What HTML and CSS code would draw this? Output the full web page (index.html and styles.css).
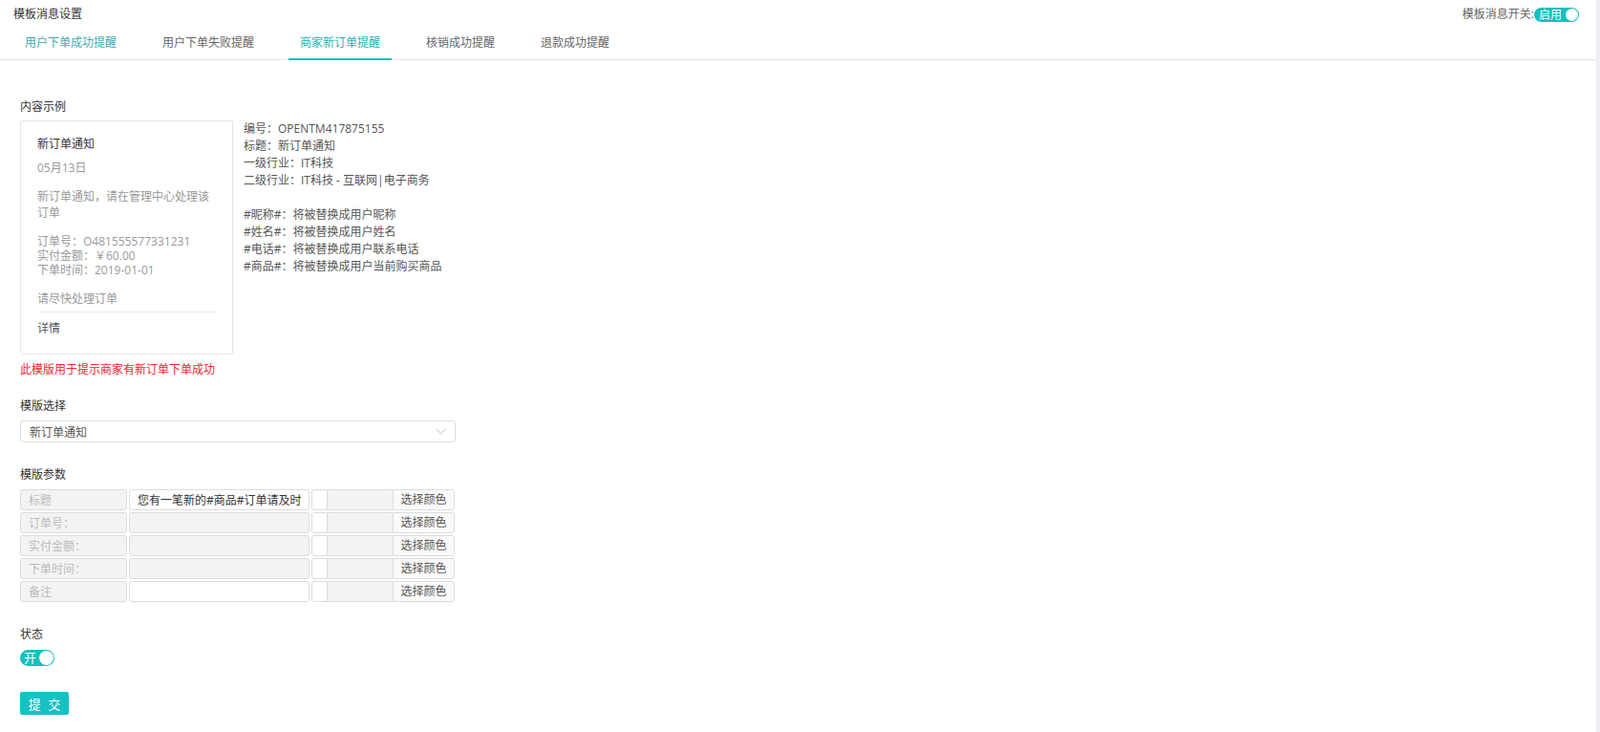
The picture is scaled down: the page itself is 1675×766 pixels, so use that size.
FILE: index.html
```html
<!DOCTYPE html>
<html lang="zh-CN">
<head>
<meta charset="UTF-8">
<meta name="viewport" content="width=device-width, initial-scale=1.0">
<title>模板消息设置</title>
<link rel="stylesheet" href="styles.css">
</head>
<body>
<div class="page">
  <div class="top-bar">
    <div class="page-title">模板消息设置</div>
    <div class="master-switch">
      <span>模板消息开关:</span>
      <span class="toggle toggle-sm"><span class="toggle-text">启用</span><span class="knob"></span></span>
    </div>
  </div>

  <div class="tabs">
    <div class="tab tab-hover">用户下单成功提醒</div>
    <div class="tab">用户下单失败提醒</div>
    <div class="tab active">商家新订单提醒</div>
    <div class="tab">核销成功提醒</div>
    <div class="tab">退款成功提醒</div>
  </div>

  <div class="content">
    <div class="label">内容示例</div>
    <div class="example">
      <div class="card">
        <div class="card-title">新订单通知</div>
        <div class="card-date">05月13日</div>
        <div class="card-desc">新订单通知，请在管理中心处理该订单</div>
        <div class="card-lines">
          <div>订单号：O481555577331231</div>
          <div>实付金额：￥60.00</div>
          <div>下单时间：2019-01-01</div>
        </div>
        <div class="card-remark">请尽快处理订单</div>
        <div class="card-link">详情</div>
      </div>
      <div class="example-info">
        <div>编号：OPENTM417875155</div>
        <div>标题：新订单通知</div>
        <div>一级行业：IT科技</div>
        <div>二级行业：IT科技 - 互联网|电子商务</div>
        <div>&nbsp;</div>
        <div>#昵称#：将被替换成用户昵称</div>
        <div>#姓名#：将被替换成用户姓名</div>
        <div>#电话#：将被替换成用户联系电话</div>
        <div>#商品#：将被替换成用户当前购买商品</div>
      </div>
    </div>
    <div class="hint">此模版用于提示商家有新订单下单成功</div>

    <div class="label label-gap">模版选择</div>
    <div class="select">
      <span>新订单通知</span>
      <svg class="arrow" width="11" height="7" viewBox="0 0 11 7"><path d="M0.5 0.8 L5.5 5.8 L10.5 0.8" fill="none" stroke="#c0c4cc" stroke-width="1"/></svg>
    </div>

    <div class="label label-wide">模版参数</div>
    <div class="params">
      <div class="param-row">
        <input class="param-name" value="标题" disabled>
        <input class="param-value" value="您有一笔新的#商品#订单请及时处理">
        <div class="color-group">
          <span class="swatch"></span>
          <span class="color-code"></span>
          <span class="color-btn">选择颜色</span>
        </div>
      </div>
      <div class="param-row">
        <input class="param-name" value="订单号：" disabled>
        <input class="param-value" value="" disabled>
        <div class="color-group">
          <span class="swatch"></span>
          <span class="color-code"></span>
          <span class="color-btn">选择颜色</span>
        </div>
      </div>
      <div class="param-row">
        <input class="param-name" value="实付金额：" disabled>
        <input class="param-value" value="" disabled>
        <div class="color-group">
          <span class="swatch"></span>
          <span class="color-code"></span>
          <span class="color-btn">选择颜色</span>
        </div>
      </div>
      <div class="param-row">
        <input class="param-name" value="下单时间：" disabled>
        <input class="param-value" value="" disabled>
        <div class="color-group">
          <span class="swatch"></span>
          <span class="color-code"></span>
          <span class="color-btn">选择颜色</span>
        </div>
      </div>
      <div class="param-row">
        <input class="param-name" value="备注" disabled>
        <input class="param-value" value="">
        <div class="color-group">
          <span class="swatch"></span>
          <span class="color-code"></span>
          <span class="color-btn">选择颜色</span>
        </div>
      </div>
    </div>

    <div class="label label-wide">状态</div>
    <div class="status-switch">
      <span class="toggle"><span class="toggle-text">开</span><span class="knob"></span></span>
    </div>

    <button class="submit">提 交</button>
  </div>
</div>
</body>
</html>
```

FILE: styles.css
```css
body {
  margin: 0;
  background: #eef0f4;
  font-family: "Open Sans", "Noto Sans CJK SC", sans-serif;
  font-size: 12px;
  color: #333;
}

.page {
  background: #fff;
  margin-right: 4px;
  min-height: 100vh;
}

.top-bar {
  display: flex;
  justify-content: space-between;
  align-items: center;
  height: 30px;
  padding: 0 18px 0 14px;
}

.page-title {
  color: #333;
  line-height: 18px;
}

.master-switch {
  display: flex;
  align-items: center;
  color: #666;
  line-height: 16px;
}

.toggle {
  display: inline-flex;
  align-items: center;
  justify-content: space-between;
  width: 36px;
  height: 17px;
  box-sizing: border-box;
  padding: 0 1px 0 4px;
  border-radius: 9px;
  background: #17bfbf;
  color: #fff;
}

.toggle-sm {
  width: 47px;
  height: 15px;
  padding: 0 1px 0 5px;
}

.toggle-text {
  font-size: 12px;
  line-height: 15px;
}

.knob {
  width: 15px;
  height: 15px;
  border-radius: 50%;
  background: #fff;
}

.toggle-sm .knob {
  width: 13px;
  height: 13px;
}

.tabs {
  display: flex;
  padding-left: 14px;
  border-bottom: 1px solid #e4e4e4;
}

.tab {
  padding: 0 12px;
  margin-right: 24px;
  height: 33px;
  line-height: 30px;
  color: #666;
  border-bottom: 2px solid transparent;
  margin-bottom: -1px;
  box-sizing: border-box;
}

.tab-hover {
  color: #3fa9ad;
}

.tab.active {
  color: #1db5b5;
  border-bottom-color: #17bfbf;
}

.content {
  padding: 40px 21px 30px;
}

.label {
  line-height: 18px;
  color: #333;
}

.label-gap {
  margin-top: 20px;
}

.label-wide {
  margin-top: 25px;
}

.example {
  display: flex;
  align-items: flex-start;
  margin-top: 5px;
}

.card {
  width: 223px;
  box-sizing: border-box;
  border: 1px solid #e6e6e6;
  border-radius: 2px;
  padding: 15px 17px 17px;
  color: #999;
}

.card-title {
  color: #333;
  line-height: 18px;
}

.card-date {
  line-height: 18px;
  margin-top: 7px;
}

.card-desc {
  line-height: 17px;
  margin-top: 12px;
}

.card-lines {
  line-height: 15px;
  margin-top: 14px;
}

.card-remark {
  line-height: 17px;
  margin-top: 14px;
  padding-bottom: 5px;
  border-bottom: 1px solid #eee;
}

.card-link {
  color: #555;
  line-height: 18px;
  margin-top: 8px;
}

.example-info {
  margin-left: 11px;
  line-height: 18px;
  color: #555;
}

.hint {
  color: #f5222d;
  line-height: 18px;
  margin-top: 7px;
}

.select {
  display: flex;
  justify-content: space-between;
  align-items: center;
  width: 456px;
  height: 23px;
  box-sizing: border-box;
  margin-top: 6px;
  padding: 0 9px;
  border: 1px solid #dcdfe6;
  border-radius: 3px;
  color: #555;
}

.params {
  margin-top: 6px;
}

.param-row {
  display: flex;
  height: 22px;
  margin-bottom: 2px;
}

.param-row input {
  box-sizing: border-box;
  height: 22px;
  border: 1px solid #dcdcdc;
  border-radius: 3px;
  padding: 0 8px;
  font: inherit;
  color: #333;
  background: #fff;
  outline: none;
}

.param-row input:disabled {
  background: #f3f3f3;
  color: #bbb;
}

.param-name {
  width: 112px;
}

.param-value {
  width: 189px;
  margin-left: 2px;
}

.color-group {
  display: flex;
  margin-left: 2px;
}

.swatch {
  width: 17px;
  box-sizing: border-box;
  border: 1px solid #dcdcdc;
  border-radius: 3px 0 0 3px;
  background: #fff;
}

.color-code {
  width: 68px;
  box-sizing: border-box;
  border-top: 1px solid #dcdcdc;
  border-bottom: 1px solid #dcdcdc;
  background: #f3f3f3;
}

.color-btn {
  width: 65px;
  box-sizing: border-box;
  border: 1px solid #dcdcdc;
  border-radius: 0 3px 3px 0;
  background: #fafafa;
  color: #555;
  text-align: center;
  line-height: 20px;
}

.status-switch {
  margin-top: 7px;
  height: 17px;
}

.status-switch .toggle-text {
  font-size: 13px;
}

.submit {
  display: block;
  margin-top: 27px;
  width: 51px;
  height: 24px;
  padding: 0 0 0 2px;
  border: none;
  border-radius: 2px;
  background: #17c1c1;
  color: #fff;
  font: inherit;
  font-size: 13px;
  letter-spacing: 2px;
  cursor: pointer;
}
```
